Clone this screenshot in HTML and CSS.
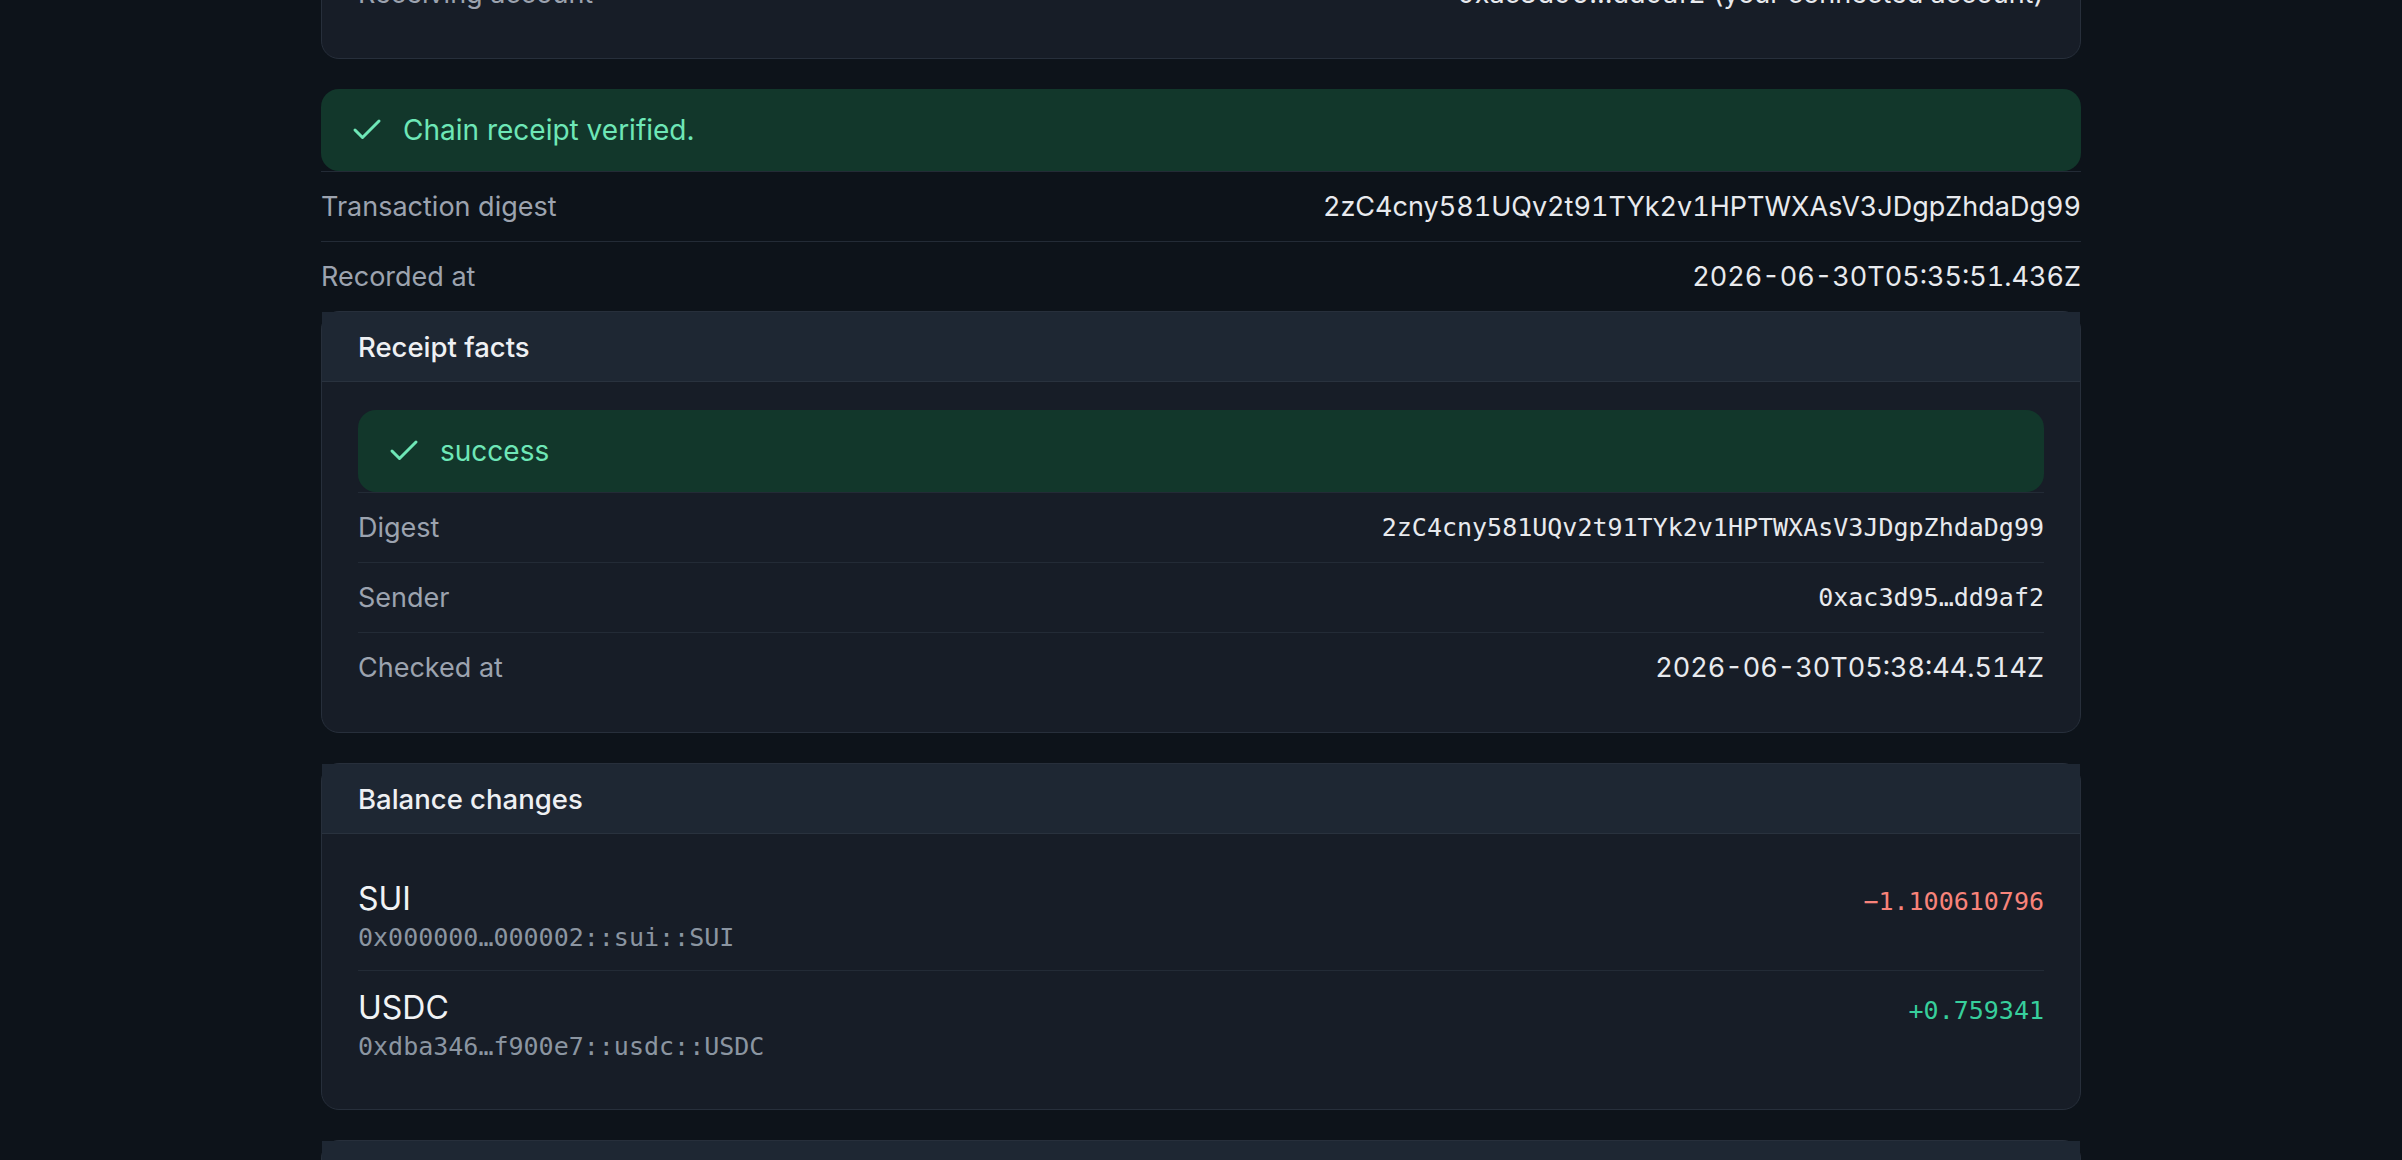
FILE: index.html
```html
<!DOCTYPE html>
<html lang="en">
<head>
    <meta charset="UTF-8">
    <meta name="viewport" content="width=device-width, initial-scale=1.0">
    <title>Payment receipt</title>
    <link rel="stylesheet" href="styles.css">
</head>
<body>
<div class="page">
    <div class="card">
        <div class="card-header">Transfer</div>
        <div class="card-body">
            <div class="kv-row">
                <span class="kv-label">Amount</span>
                <span class="kv-value">0.759341 USDC</span>
            </div>
            <div class="kv-row">
                <span class="kv-label">Receiving account</span>
                <span class="kv-value">0xac3d95…dd9af2 (your connected account)</span>
            </div>
        </div>
    </div>

    <div class="verify">
        <div class="notice">
            <svg class="check" viewBox="0 0 24 24" fill="none" stroke="currentColor" stroke-width="2" stroke-linecap="round" stroke-linejoin="round"><path d="M20 6 9 17l-5-5"/></svg>
            <span>Chain receipt verified.</span>
        </div>
        <div class="kv-row">
            <span class="kv-label">Transaction digest</span>
            <span class="kv-value">2zC4cny581UQv2t91TYk2v1HPTWXAsV3JDgpZhdaDg99</span>
        </div>
        <div class="kv-row">
            <span class="kv-label">Recorded at</span>
            <span class="kv-value">2026-06-30T05:35:51.436Z</span>
        </div>

        <div class="card">
            <div class="card-header">Receipt facts</div>
            <div class="card-body">
                <div class="notice">
                    <svg class="check" viewBox="0 0 24 24" fill="none" stroke="currentColor" stroke-width="2" stroke-linecap="round" stroke-linejoin="round"><path d="M20 6 9 17l-5-5"/></svg>
                    <span>success</span>
                </div>
                <div class="kv-row">
                    <span class="kv-label">Digest</span>
                    <span class="kv-value mono">2zC4cny581UQv2t91TYk2v1HPTWXAsV3JDgpZhdaDg99</span>
                </div>
                <div class="kv-row">
                    <span class="kv-label">Sender</span>
                    <span class="kv-value mono">0xac3d95…dd9af2</span>
                </div>
                <div class="kv-row">
                    <span class="kv-label">Checked at</span>
                    <span class="kv-value">2026-06-30T05:38:44.514Z</span>
                </div>
            </div>
        </div>
    </div>

    <div class="card">
        <div class="card-header">Balance changes</div>
        <div class="card-body">
            <div class="asset-row">
                <div class="asset-info">
                    <div class="asset-name">SUI</div>
                    <div class="asset-type">0x000000…000002::sui::SUI</div>
                </div>
                <span class="amount negative">−1.100610796</span>
            </div>
            <div class="asset-row">
                <div class="asset-info">
                    <div class="asset-name">USDC</div>
                    <div class="asset-type">0xdba346…f900e7::usdc::USDC</div>
                </div>
                <span class="amount positive">+0.759341</span>
            </div>
        </div>
    </div>

    <div class="card">
        <div class="card-header">Raw transaction</div>
        <div class="card-body">
            <div class="kv-row">
                <span class="kv-label">Checkpoint</span>
                <span class="kv-value mono">—</span>
            </div>
        </div>
    </div>
</div>
</body>
</html>
```

FILE: styles.css
```css
body {
    margin: 0;
    background-color: #0d131a;
    color: #e5e7eb;
    font-family: Inter, "Noto Sans", sans-serif;
    font-size: 27px;
}

/* page is scrolled: the first card is mostly above the fold */
.page {
    width: 1760px;
    margin: -211px auto 0;
    display: flex;
    flex-direction: column;
    gap: 30px;
}

.card {
    background-color: #171d27;
    border: 1px solid #272f3b;
    border-radius: 18px;
}

.card-header {
    box-sizing: border-box;
    height: 70px;
    padding: 0 36px;
    display: flex;
    align-items: center;
    background-color: #1e2733;
    border-bottom: 1px solid #29323e;
    font-size: 27.5px;
    font-weight: 500;
    color: #eef0f3;
}

.card-body {
    padding: 28px 36px 30px;
}

.kv-row {
    box-sizing: border-box;
    height: 70px;
    display: flex;
    justify-content: space-between;
    align-items: center;
    border-top: 1px solid #232b36;
}

.card-body > .kv-row:first-child {
    border-top: none;
}

.kv-label {
    color: #9ca3af;
}

.kv-value {
    color: #e8eaee;
    font-variant-numeric: tabular-nums;
}

.mono,
.asset-type,
.amount {
    font-family: "DejaVu Sans Mono", "Liberation Mono", monospace;
    font-size: 25px;
}

.notice {
    box-sizing: border-box;
    height: 82px;
    padding: 0 28px;
    display: flex;
    align-items: center;
    gap: 18px;
    background-color: #12372b;
    border-radius: 18px;
    color: #6ee7b7;
    font-size: 28px;
}

.check {
    width: 36px;
    height: 36px;
    flex-shrink: 0;
}

.asset-row {
    display: flex;
    justify-content: space-between;
    align-items: baseline;
    padding: 16px 0 14px;
    border-top: 1px solid #232b36;
}

.asset-row:first-child {
    border-top: none;
}

.asset-name {
    font-size: 32px;
    line-height: 42px;
    color: #f1f3f5;
}

.asset-type {
    line-height: 36px;
    color: #8b95a1;
}

.amount.negative {
    color: #f8837a;
}

.amount.positive {
    color: #37cf9c;
}
```
